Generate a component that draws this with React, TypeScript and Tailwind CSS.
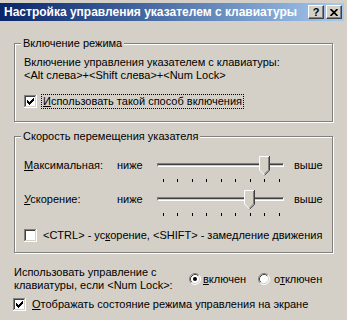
import type { ReactNode } from 'react';

const BG = '#d4d0c8';

function CheckBox({ checked }: { checked: boolean }) {
  return (
    <svg width="13" height="13" viewBox="0 0 13 13" shapeRendering="crispEdges" className="shrink-0">
      <rect width="13" height="13" fill="#fff" />
      <rect width="12" height="12" fill="#808080" />
      <rect x="1" y="1" width="11" height="11" fill={BG} />
      <rect x="1" y="1" width="10" height="10" fill="#404040" />
      <rect x="2" y="2" width="9" height="9" fill="#fff" />
      {checked && (
        <path d="M3 5 H4 V6 H5 V7 H6 V6 H7 V5 H8 V4 H9 V3 H10 V6 H9 V7 H8 V8 H7 V9 H6 V10 H5 V9 H4 V8 H3 Z" fill="#000" />
      )}
    </svg>
  );
}

function Radio({ checked }: { checked: boolean }) {
  return (
    <svg width="12" height="12" viewBox="0 0 12 12" className="shrink-0">
      <circle cx="6" cy="6" r="5" fill="#fff" />
      <path d="M2.11 9.89 A5.5 5.5 0 0 1 9.89 2.11" stroke="#808080" fill="none" />
      <path d="M9.89 2.11 A5.5 5.5 0 0 1 2.11 9.89" stroke="#fff" fill="none" />
      <path d="M2.82 9.18 A4.5 4.5 0 0 1 9.18 2.82" stroke="#404040" fill="none" />
      <path d="M9.18 2.82 A4.5 4.5 0 0 1 2.82 9.18" stroke={BG} fill="none" />
      {checked && <circle cx="6" cy="6" r="2" fill="#000" />}
    </svg>
  );
}

function GroupBox({ label, className, children }: { label: string; className: string; children: ReactNode }) {
  return (
    <div className={`relative w-[319px] border border-[#808080] shadow-[inset_1px_1px_0_#fff,1px_1px_0_#fff] ${className}`}>
      <span className="absolute left-[6px] top-[-7px] bg-[#d4d0c8] px-[2px]">{label}</span>
      {children}
    </div>
  );
}

function Slider({ value }: { value: number }) {
  const ticks = Array.from({ length: 9 }, (_, i) => Math.round(5.5 + i * 14.5) + 0.5);
  return (
    <div className="relative h-[26px] w-[127px]">
      <div className="mt-[7px] h-[4px] border border-t-[#808080] border-l-[#808080] border-b-white border-r-white">
        <div className="h-[2px] border-t border-[#404040] bg-[#d4d0c8]" />
      </div>
      <svg width="127" height="3" className="absolute left-0 top-[23px]" shapeRendering="crispEdges">
        {ticks.map((x) => (
          <line key={x} x1={x} x2={x} y1="0" y2="3" stroke="#000" />
        ))}
      </svg>
      <svg
        width="12"
        height="20"
        viewBox="0 0 12 20"
        className="absolute top-0"
        style={{ left: Math.round(value * 14.5) }}
      >
        <polygon points="0,0 11,0 11,14 5.5,19.5 0,14" fill={BG} />
        <path d="M0.5 14 V0.5 H10" stroke="#fff" fill="none" />
        <path d="M0.5 14 L5.5 19" stroke="#fff" fill="none" />
        <path d="M10.5 0 V14.3 L5.5 19.3" stroke="#404040" fill="none" />
        <path d="M9.5 1 V14 L5.5 18" stroke="#808080" fill="none" />
      </svg>
    </div>
  );
}

function SliderRow({ label, value, className }: { label: ReactNode; value: number; className?: string }) {
  return (
    <div className={`grid grid-cols-[93px_40px_127px_1fr] items-start ${className ?? ''}`}>
      <span className="mt-[3px]">{label}</span>
      <span className="mt-[3px]">ниже</span>
      <Slider value={value} />
      <span className="mt-[3px] pl-[10px]">выше</span>
    </div>
  );
}

function CaptionButton({ children }: { children: ReactNode }) {
  return (
    <div className="flex h-[14px] w-[16px] items-center justify-center border border-t-white border-l-white border-r-[#404040] border-b-[#404040] bg-[#d4d0c8] shadow-[inset_-1px_-1px_0_#808080]">
      {children}
    </div>
  );
}

export default function App() {
  return (
    <div className="h-[320px] w-[347px] overflow-hidden bg-[#d4d0c8] pr-[3px] pt-[3px] font-['Liberation_Sans',Arial,sans-serif] text-[11px] leading-[13px] text-black">
      {/* caption */}
      <div className="flex h-[18px] items-center bg-linear-to-r from-[#0a246a] to-[#a6caf0] pl-[4px] pr-[2px]">
        <span className="text-[12px] font-bold text-white">Настройка управления указателем с клавиатуры</span>
        <div className="ml-auto flex gap-[2px]">
          <CaptionButton>
            <span className="text-[11px] font-bold leading-[11px]">?</span>
          </CaptionButton>
          <CaptionButton>
            <svg width="8" height="7" viewBox="0 0 8 7">
              <path d="M0.5 0 L7.5 7 M7.5 0 L0.5 7" stroke="#000" strokeWidth="1.7" />
            </svg>
          </CaptionButton>
        </div>
      </div>

      <div className="pl-[14px]">
        <GroupBox label="Включение режима" className="mt-[22px] h-[79px] pl-[9px] pt-[12px]">
          <div>Включение управления указателем с клавиатуры:</div>
          <div>&lt;Alt слева&gt;+&lt;Shift слева&gt;+&lt;Num Lock&gt;</div>
          <div className="mt-[12px] flex items-center">
            <CheckBox checked />
            <span className="ml-[4px] border border-dotted border-black px-[1px]">
              <u className="underline-offset-[1px]">И</u>спользовать такой способ включения
            </span>
          </div>
        </GroupBox>

        <GroupBox label="Скорость перемещения указателя" className="mt-[14px] h-[117px] pl-[9px] pt-[19px]">
          <SliderRow label={<><u className="underline-offset-[1px]">М</u>аксимальная:</>} value={7} />
          <SliderRow label={<><u className="underline-offset-[1px]">У</u>скорение:</>} value={6} className="mt-[8px]" />
          <div className="mt-[13px] flex items-center gap-[6px]">
            <CheckBox checked={false} />
            <span>
              &lt;CTRL&gt; - ус<u className="underline-offset-[1px]">к</u>орение, &lt;SHIFT&gt; - замедление движения
            </span>
          </div>
        </GroupBox>

        <div className="mt-[13px] flex items-center">
          <div className="w-[175px]">
            <div>Использовать управление с</div>
            <div>клавиатуры, если &lt;Num Lock&gt;:</div>
          </div>
          <div className="flex w-[69px] items-center">
            <Radio checked />
            <span className="ml-[2px]">
              <u className="underline-offset-[1px]">в</u>ключен
            </span>
          </div>
          <div className="flex items-center">
            <Radio checked={false} />
            <span className="ml-[4px]">
              о<u className="underline-offset-[1px]">т</u>ключен
            </span>
          </div>
        </div>

        <div className="-ml-px mt-[6px] flex items-center gap-[6px]">
          <CheckBox checked />
          <span>
            <u className="underline-offset-[1px]">О</u>тображать состояние режима управления на экране
          </span>
        </div>
      </div>
    </div>
  );
}
